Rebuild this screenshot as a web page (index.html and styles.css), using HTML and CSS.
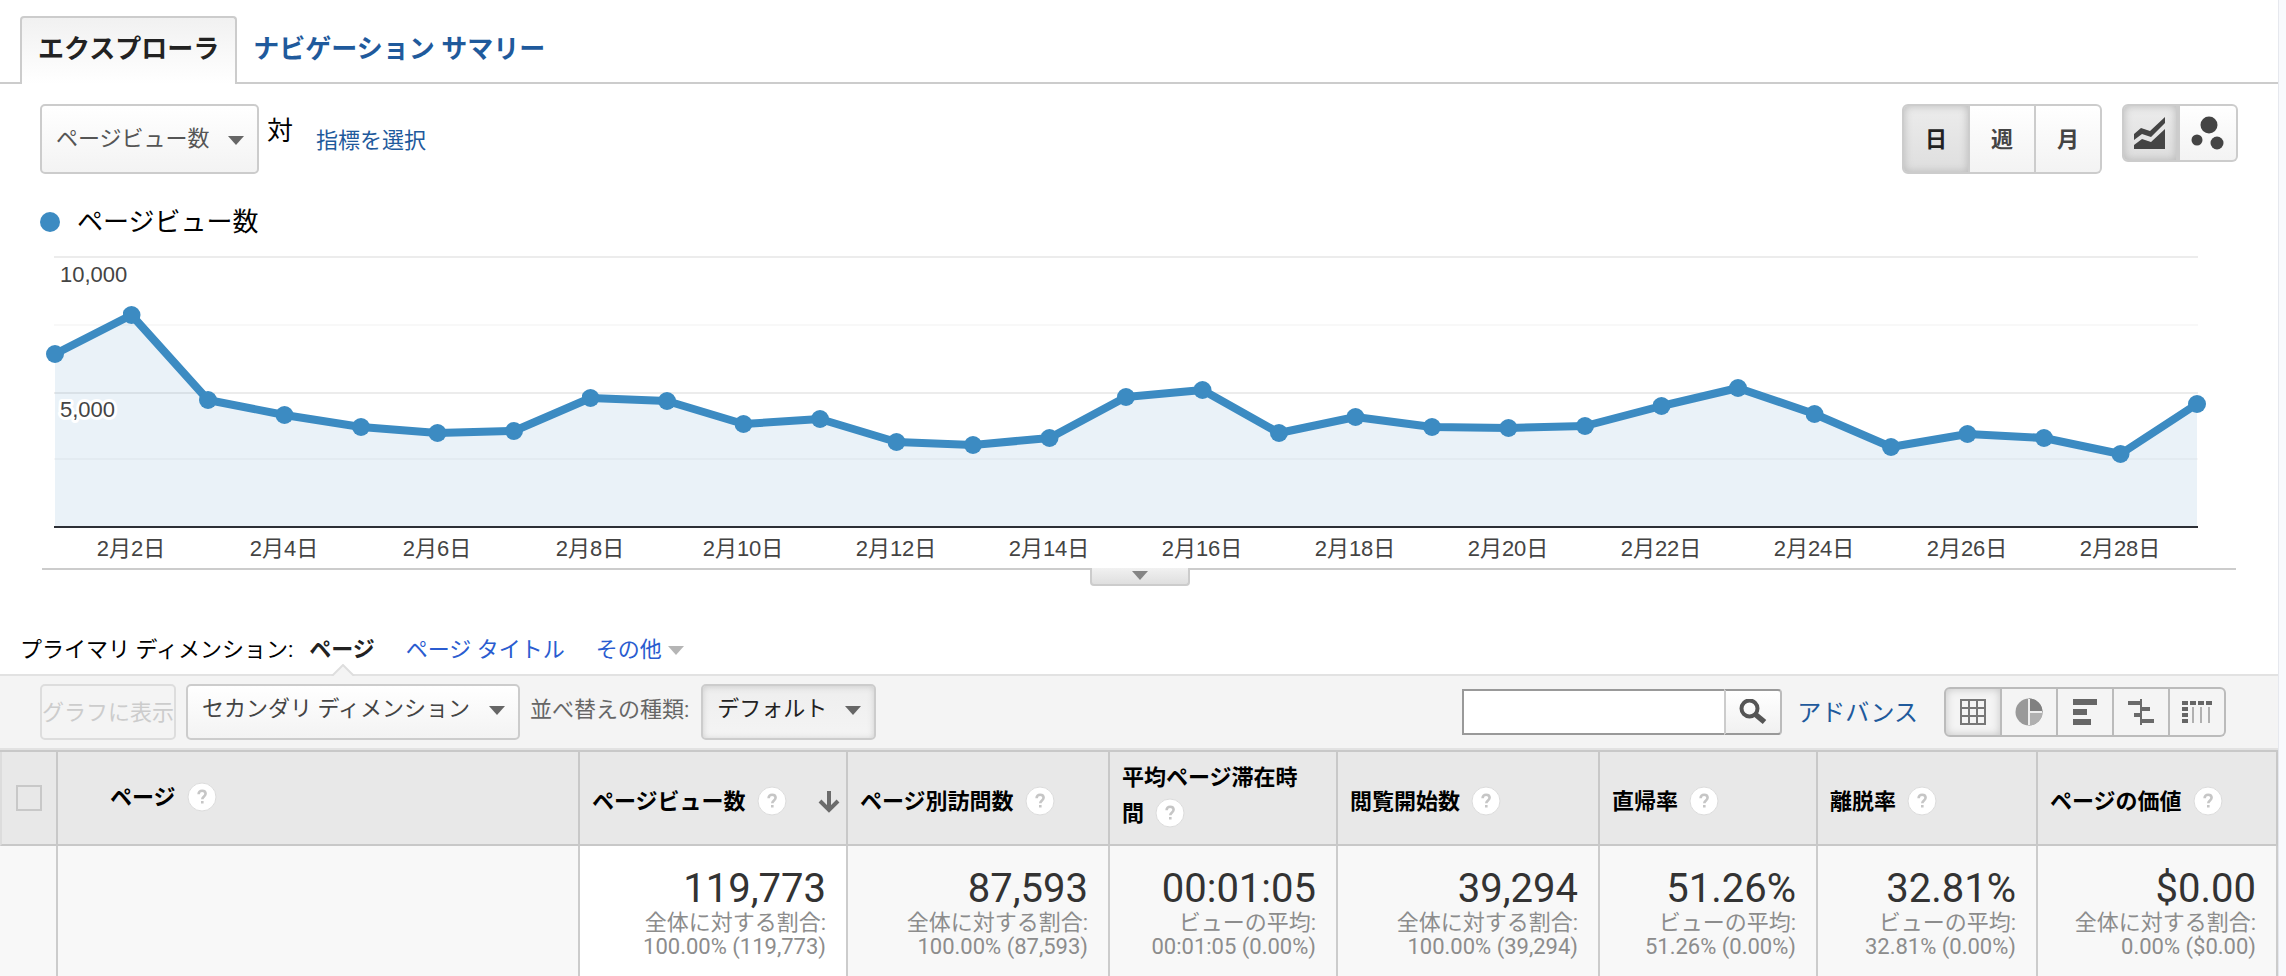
FILE: index.html
```html
<!DOCTYPE html>
<html lang="ja">
<head>
<meta charset="utf-8">
<title>ページ</title>
<link rel="stylesheet" href="styles.css">
</head>
<body>
<svg class="defs" aria-hidden="true">
  <symbol id="help" viewBox="0 0 30 30">
    <circle cx="15" cy="15" r="14" fill="#fff" stroke="#dcdcdc" stroke-width="1"/>
    <path d="M11.6 12.2c0-2.2 1.4-3.5 3.5-3.5s3.5 1.3 3.5 3.1c0 2.6-3.3 2.6-3.3 5.4M15.3 19v2.6" fill="none" stroke="#c6c6c6" stroke-width="2.6"/>
  </symbol>
</svg>
<main class="panel">
  <nav class="tabs">
    <a class="tab active" href="#explorer">エクスプローラ</a>
    <a class="tab" href="#summary">ナビゲーション サマリー</a>
  </nav>

  <section class="controls">
    <span class="select tall"><select aria-label="指標"><option>ページビュー数</option></select></span>
    <span class="versus">対</span>
    <a class="pick" href="#metric">指標を選択</a>
    <div class="group period">
      <button type="button" class="on">日</button>
      <button type="button">週</button>
      <button type="button">月</button>
    </div>
    <div class="group kind">
      <button type="button" class="on" aria-label="折れ線グラフ">
        <svg width="32" height="34" viewBox="0 0 32 34"><path d="M0 33v-4l8-6 9 3 14-13v20zM0 18l7-6 9 3L31 1v6L17 21l-9-3-8 6z" fill="#444"/></svg>
      </button>
      <button type="button" aria-label="モーション グラフ">
        <svg width="34" height="34" viewBox="0 0 34 34"><g fill="#444"><circle cx="18" cy="9" r="8.5"/><circle cx="6" cy="24" r="5.5"/><circle cx="26" cy="27" r="6.5"/></g></svg>
      </button>
    </div>
  </section>

  <section class="chart">
    <div class="legend"><span class="dot"></span>ページビュー数</div>
    <svg class="plot" viewBox="40 242 2198 328" role="img" aria-label="ページビュー数">
      <defs>
        <marker id="point" markerUnits="userSpaceOnUse" markerWidth="18" markerHeight="18" refX="9" refY="9"><circle cx="9" cy="9" r="9" fill="#3c8bc2"/></marker>
      </defs>
      <path d="M54 257H2198M54 393H2198" stroke="#ececec" stroke-width="2"/>
      <path d="M54 325H2198M54 459H2198" stroke="#f8f8f8" stroke-width="2"/>
      <path d="M55 526V354L131.500 315 208 400 284.500 415 361 427 437.500 433 514 431 590.500 398 667 401 743.500 424 820 419 896.500 442 973 445 1049.500 438 1126 397 1202.500 390 1279 433 1355.500 417 1432 427 1508.500 428 1585 426 1661.500 406 1738 388 1814.500 414 1891 447 1967.500 434 2044 438 2120.500 454 2197 404V526z" fill="#3c8bc2" fill-opacity=".11"/>
      <path d="M54 527H2198" stroke="#2d3036" stroke-width="2"/>
      <polyline points="55,354 131.500,315 208,400 284.500,415 361,427 437.500,433 514,431 590.500,398 667,401 743.500,424 820,419 896.500,442 973,445 1049.500,438 1126,397 1202.500,390 1279,433 1355.500,417 1432,427 1508.500,428 1585,426 1661.500,406 1738,388 1814.500,414 1891,447 1967.500,434 2044,438 2120.500,454 2197,404" fill="none" stroke="#3c8bc2" stroke-width="8" stroke-linejoin="round" marker-start="url(#point)" marker-mid="url(#point)" marker-end="url(#point)"/>
      <g class="axis">
        <text x="60" y="282">10,000</text>
        <text x="60" y="417">5,000</text>
      </g>
      <g class="axis days">
        <text x="131" y="556">2月2日</text><text x="284" y="556">2月4日</text><text x="437" y="556">2月6日</text>
        <text x="590" y="556">2月8日</text><text x="743" y="556">2月10日</text><text x="896" y="556">2月12日</text>
        <text x="1049" y="556">2月14日</text><text x="1202" y="556">2月16日</text><text x="1355" y="556">2月18日</text>
        <text x="1508" y="556">2月20日</text><text x="1661" y="556">2月22日</text><text x="1814" y="556">2月24日</text>
        <text x="1967" y="556">2月26日</text><text x="2120" y="556">2月28日</text>
      </g>
      <path d="M42 569H2236" stroke="#ccc" stroke-width="2"/>
    </svg>
    <button type="button" class="handle" aria-label="開く"><svg width="16" height="9" viewBox="0 0 16 9"><path d="M0 0h16L8 9z" fill="#858585"/></svg></button>
  </section>

  <section class="dims">
    <span>プライマリ ディメンション:</span>
    <strong class="current">ページ<svg class="notch" width="24" height="12" viewBox="0 0 24 12"><path d="M1 12 12 1l11 11" fill="#f4f4f4" stroke="#dedede" stroke-width="2"/></svg></strong>
    <a href="#title">ページ タイトル</a>
    <a class="more" href="#other">その他<svg width="16" height="9" viewBox="0 0 16 9"><path d="M0 0h16L8 9z" fill="#b5b5b5"/></svg></a>
  </section>

  <section class="toolbar">
    <button type="button" class="plot-rows" disabled>グラフに表示</button>
    <span class="select"><select aria-label="セカンダリ ディメンション"><option>セカンダリ ディメンション</option></select></span>
    <label for="sort">並べ替えの種類:</label>
    <span class="select pressed"><select id="sort"><option>デフォルト</option></select></span>
    <form class="search">
      <input type="text" aria-label="検索">
      <button type="button" aria-label="検索"><svg width="28" height="26" viewBox="0 0 28 26"><circle cx="10.500" cy="9.500" r="8" fill="none" stroke="#555" stroke-width="4"/><path d="M16.500 15.500 25.500 23" stroke="#555" stroke-width="5.500"/></svg></button>
    </form>
    <a class="advanced" href="#advanced">アドバンス</a>
    <div class="group views">
      <button type="button" class="on" aria-label="データ"><svg width="26" height="26" viewBox="0 0 26 26"><path d="M1 1h24v24H1zM9 1v24M17 1v24M1 9h24M1 17h24" fill="none" stroke="#777" stroke-width="2"/></svg></button>
      <button type="button" aria-label="割合"><svg width="28" height="28" viewBox="0 0 28 28"><circle cx="14" cy="14" r="13.500" fill="#999"/><path d="M14 14V.500A13.500 13.500 0 0 1 27.500 14z" fill="#808080"/><path d="M14 14v13.500A13.500 13.500 0 0 0 27.500 14z" fill="#b0b0b0"/><path d="M14 1v26M14 14h13" stroke="#eee" stroke-width="2"/></svg></button>
      <button type="button" aria-label="掲載結果"><svg width="26" height="28" viewBox="0 0 26 28"><path d="M1 1h24v6H1zM1 11h14v6H1zM1 21h18v6H1z" fill="#666"/></svg></button>
      <button type="button" aria-label="比較"><svg width="28" height="28" viewBox="0 0 28 28"><path d="M1 3h13v4H1zM14 9h9v4h-9zM7 15h7v4H7zM14 21h13v4H14z M13 1h2v26h-2z" fill="#6a6a6a"/></svg></button>
      <button type="button" aria-label="ピボット"><svg width="32" height="24" viewBox="0 0 32 24"><path d="M1 1h6v4H1zM9 1h6v4H9zM17 1h6v4h-6zM25 1h6v4h-6zM1 7h6v4H1zM1 13h6v4H1zM1 19h6v4H1z" fill="#666"/><path d="M12 7v16M20 7v16M28 7v16" stroke="#b0b0b0" stroke-width="2"/></svg></button>
    </div>
  </section>

  <table class="report">
    <colgroup><col class="c-check"><col class="c-page"><col class="c-views"><col class="c-unique"><col class="c-time"><col class="c-entry"><col class="c-bounce"><col class="c-exit"><col class="c-value"></colgroup>
    <thead>
      <tr>
        <th class="check"><input type="checkbox" aria-label="すべて選択"></th>
        <th class="page">ページ<svg class="help"><use href="#help"/></svg></th>
        <th><div class="sorted"><span>ページビュー数<svg class="help"><use href="#help"/></svg></span><svg width="22" height="22" viewBox="0 0 22 22"><path d="M11 0v19M2 10l9 9 9-9" fill="none" stroke="#6b6b6b" stroke-width="4"/></svg></div></th>
        <th>ページ別訪問数<svg class="help"><use href="#help"/></svg></th>
        <th class="two">平均ページ滞在時間<svg class="help"><use href="#help"/></svg></th>
        <th>閲覧開始数<svg class="help"><use href="#help"/></svg></th>
        <th>直帰率<svg class="help"><use href="#help"/></svg></th>
        <th>離脱率<svg class="help"><use href="#help"/></svg></th>
        <th>ページの価値<svg class="help"><use href="#help"/></svg></th>
      </tr>
    </thead>
    <tbody>
      <tr>
        <td></td>
        <td></td>
        <td class="main"><div class="big">119,773</div><div>全体に対する割合:</div><div>100.00% (119,773)</div></td>
        <td><div class="big">87,593</div><div>全体に対する割合:</div><div>100.00% (87,593)</div></td>
        <td><div class="big">00:01:05</div><div>ビューの平均:</div><div>00:01:05 (0.00%)</div></td>
        <td><div class="big">39,294</div><div>全体に対する割合:</div><div>100.00% (39,294)</div></td>
        <td><div class="big">51.26%</div><div>ビューの平均:</div><div>51.26% (0.00%)</div></td>
        <td><div class="big">32.81%</div><div>ビューの平均:</div><div>32.81% (0.00%)</div></td>
        <td><div class="big">$0.00</div><div>全体に対する割合:</div><div>0.00% ($0.00)</div></td>
      </tr>
    </tbody>
  </table>
</main>
</body>
</html>
```
FILE: styles.css
```css
* { box-sizing: border-box; }

body {
  margin: 0;
  padding-right: 8px;
  background: #f8f9fc;
  color: #000;
  font: 22px/24px Roboto, "Noto Sans CJK JP", sans-serif;
}

a { color: #1f5a9c; text-decoration: none; }
button, select, input { font: inherit; color: inherit; margin: 0; }
svg { display: block; flex: none; }
.defs { position: absolute; width: 0; height: 0; }

.panel { background: #fff; box-shadow: 1px 0 0 #e6e8ee; }

/* Tabs */
.tabs {
  display: flex;
  padding: 16px 20px 0;
  border-bottom: 2px solid #ccc;
}
.tab {
  height: 68px;
  margin-bottom: -2px;
  padding: 0 14px;
  border: 2px solid transparent;
  border-bottom: 0;
  font-size: 26px;
  font-weight: bold;
  line-height: 62px;
}
.tab.active {
  padding: 0 16px;
  border-color: #ccc;
  border-radius: 4px 4px 0 0;
  background: linear-gradient(#f1f1f1, #fff);
  color: #222;
}

/* Chart controls */
.controls {
  display: flex;
  align-items: flex-start;
  padding: 20px 40px 0;
}
.select { position: relative; display: inline-flex; }
.select::after {
  content: "";
  position: absolute;
  right: 15px;
  top: 22px;
  border: 8px solid transparent;
  border-top: 9px solid #666;
  border-bottom: 0;
  pointer-events: none;
}
.select select {
  appearance: none;
  height: 56px;
  padding: 0 46px 6px 14px;
  border: 2px solid #ccc;
  border-radius: 5px;
  background: linear-gradient(#fff, #f3f3f3);
  color: #444;
}
.select.tall select { height: 70px; padding-bottom: 0; color: #555; }
.select.tall::after { top: 32px; }
.select.pressed select {
  background: linear-gradient(#eee, #f4f4f4);
  box-shadow: inset 0 1px 6px #ccc;
  color: #222;
}
.versus { padding: 15px 0 0 8px; font-size: 26px; }
.pick { padding: 25px 0 0 23px; }

.group { display: flex; }
.group button {
  display: flex;
  align-items: center;
  justify-content: center;
  padding: 0;
  border: 2px solid #ccc;
  border-left-width: 0;
  background: linear-gradient(#fff, #f3f3f3);
}
.group button:first-child { border-left-width: 2px; border-radius: 6px 0 0 6px; }
.group button:last-child { border-radius: 0 6px 6px 0; }
.group .on {
  background: linear-gradient(#ececec, #dedede);
  box-shadow: inset 0 0 8px #b8b8b8;
}
.period { margin-left: auto; }
.period button { width: 66px; height: 70px; padding-top: 2px; font-weight: bold; color: #444; }
.period .on { width: 68px; color: #222; }
.kind { margin-left: 20px; }
.kind button { width: 58px; height: 58px; }
.kind .on { border-right-width: 4px; }

/* Chart */
.chart { position: relative; padding: 29px 40px 0; }
.legend {
  display: flex;
  align-items: center;
  gap: 17px;
  height: 38px;
  margin-bottom: 1px;
  font-size: 26px;
}
.dot { width: 20px; height: 20px; border-radius: 50%; background: #3c8bc2; }
.plot { width: 100%; height: auto; }
.axis {
  fill: #444;
  font: 22px "Liberation Sans", "Noto Sans CJK JP", sans-serif;
  stroke: #fff;
  stroke-width: 6px;
  stroke-linejoin: round;
  paint-order: stroke;
}
.days { text-anchor: middle; stroke: none; }
.handle {
  position: absolute;
  left: 50%;
  bottom: -16px;
  display: flex;
  justify-content: center;
  width: 100px;
  height: 18px;
  margin-left: -49px;
  padding: 3px 0 0;
  border: 2px solid #ccc;
  border-top: 0;
  border-radius: 0 0 4px 4px;
  background: linear-gradient(#f1f1f1, #dfdfdf);
}

/* Dimension picker */
.dims {
  display: flex;
  padding: 62px 20px 6px;
  line-height: 36px;
}
.dims a { margin-left: 31px; color: #2a5cd0; }
.current { position: relative; margin-left: 16px; color: #222; }
.notch { position: absolute; left: 22px; bottom: -8px; }
.dims .more { display: flex; align-items: center; gap: 6px; }

/* Table toolbar */
.toolbar {
  display: flex;
  align-items: center;
  padding: 8px 52px 8px 40px;
  border: solid #e2e2e2;
  border-width: 2px 0;
  background: #f4f4f4;
}
.plot-rows {
  height: 56px;
  margin-right: 10px;
  padding: 2px 0 0;
  border: 2px solid #ddd;
  border-radius: 5px;
  background: #f4f4f4;
  color: #ccc;
}
.toolbar label { padding: 0 12px 4px 10px; color: #666; }
.search { display: flex; height: 46px; margin-left: auto; }
.search input {
  width: 262px;
  padding: 0 8px;
  border: 2px solid #999;
  border-right: 0;
  border-radius: 0;
  background: #fff;
}
.search button {
  display: flex;
  align-items: center;
  justify-content: center;
  width: 58px;
  padding: 0;
  border: solid #999;
  border-width: 2px;
  border-left-color: #ccc;
  border-right-color: #bbb;
  border-radius: 0 4px 4px 0;
  background: linear-gradient(#fff, #f1f1f1);
}
.advanced { margin: 0 26px 0 15px; padding-top: 2px; font-size: 24px; }
.views button { width: 56px; height: 50px; border-color: #bbb; background: #f4f4f4; }
.views .on { width: 58px; background: #f4f4f4; box-shadow: inset 0 0 8px #c4c4c4; }

/* Report table */
.report {
  width: 100%;
  table-layout: fixed;
  border-spacing: 0;
  border-top: 2px solid #c8c8c8;
}
.c-check { width: 58px; }
.c-page { width: 522px; }
.c-views { width: 268px; }
.c-unique { width: 262px; }
.c-time { width: 228px; }
.c-entry { width: 262px; }
.c-bounce { width: 218px; }
.c-exit { width: 220px; }
.c-value { width: 240px; }
.report th {
  height: 94px;
  padding: 8px 12px 0;
  border: solid #c8c8c8;
  border-width: 0 2px 2px 0;
  background: #e8e8e8;
  line-height: 36px;
  text-align: left;
}
.report th.two { padding: 0 32px 4px 12px; }
.report th.page { padding: 0 12px 0 52px; }
.report th.check { padding: 0 0 0 14px; border-left: 2px solid #dcdcdc; }
.check input {
  display: block;
  appearance: none;
  width: 26px;
  height: 26px;
  border: 2px solid #c8c8c8;
}
.help { display: inline-block; width: 30px; height: 30px; margin-left: 11px; vertical-align: -7px; }
.sorted { display: flex; align-items: center; justify-content: space-between; margin-right: -6px; }
.report td {
  height: 130px;
  padding: 21px 20px 16px 8px;
  border-right: 2px solid #ccc;
  background: #f8f8f8;
  color: #8c8c8c;
  text-align: right;
  vertical-align: top;
  white-space: nowrap;
}
.report td.main { background: #fff; }
.report .big { color: #333; font-size: 40px; line-height: 44px; }
```
